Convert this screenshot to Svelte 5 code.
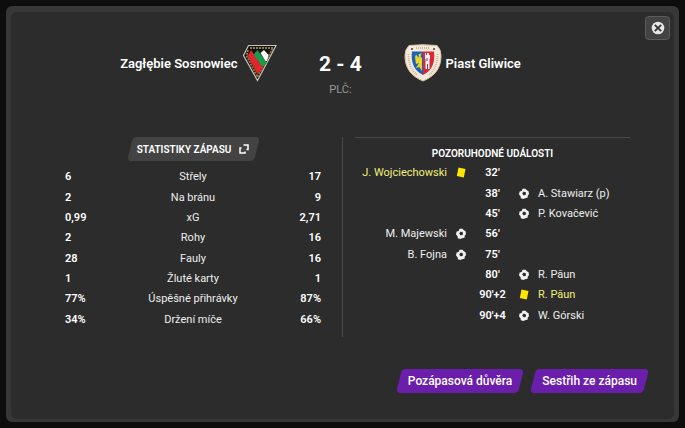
<script lang="ts">
  type MatchEvent = {
    minute: string;
    player: string;
    side: 'home' | 'away';
    type: 'goal' | 'card';
  };

  const stats = [
    { label: 'Střely', home: '6', away: '17' },
    { label: 'Na bránu', home: '2', away: '9' },
    { label: 'xG', home: '0,99', away: '2,71' },
    { label: 'Rohy', home: '2', away: '16' },
    { label: 'Fauly', home: '28', away: '16' },
    { label: 'Žluté karty', home: '1', away: '1' },
    { label: 'Úspěšné přihrávky', home: '77%', away: '87%' },
    { label: 'Držení míče', home: '34%', away: '66%' }
  ];

  const events: MatchEvent[] = [
    { minute: "32'", player: 'J. Wojciechowski', side: 'home', type: 'card' },
    { minute: "38'", player: 'A. Stawiarz (p)', side: 'away', type: 'goal' },
    { minute: "45'", player: 'P. Kovačević', side: 'away', type: 'goal' },
    { minute: "56'", player: 'M. Majewski', side: 'home', type: 'goal' },
    { minute: "75'", player: 'B. Fojna', side: 'home', type: 'goal' },
    { minute: "80'", player: 'R. Păun', side: 'away', type: 'goal' },
    { minute: "90'+2", player: 'R. Păun', side: 'away', type: 'card' },
    { minute: "90'+4", player: 'W. Górski', side: 'away', type: 'goal' }
  ];

  let open = $state(true);
</script>

{#snippet eventIcon(type: string)}
  {#if type === 'card'}
    <svg class="event-icon" width="12" height="12" viewBox="0 0 12 12">
      <path d="M3.500 .5 10.500 2 8.800 10.500 1.800 9Z" fill="#ffe600" />
    </svg>
  {:else}
    <svg class="event-icon" width="12" height="12" viewBox="0 0 12 12">
      <path d="M4.500 .8 7.600 .8 8.800 2.200 10.600 3.300 11 6.300 9.800 7.500 9.500 9.800 7 10.200 5.500 11 2.800 10.200 2.600 8.300 1 6.500 1.600 3.600 3.700 3Z" fill="#f2f2f2" />
      <path d="M5.800 3.600 8 4.500 7.700 6.900 5.300 7.300 4.200 5.300Z" fill="#2c2c2c" />
    </svg>
  {/if}
{/snippet}

{#if open}
  <div class="modal" role="dialog" aria-label="Zagłębie Sosnowiec 2 - 4 Piast Gliwice">
    <div class="panel">
      <button class="close-btn" aria-label="Zavřít" onclick={() => (open = false)}>
        <svg width="14" height="14" viewBox="0 0 14 14">
          <circle cx="7" cy="7" r="6.300" fill="#e8e8e8" />
          <path d="M3.800 3.800 10.200 10.200M10.200 3.800 3.800 10.200" stroke="#333" stroke-width="1.800" />
        </svg>
      </button>

      <header class="match-header">
        <div class="team home">
          <span>Zagłębie Sosnowiec</span>
          <svg width="36" height="38" viewBox="0 0 36 38">
            <path d="M6.500 1.500H34L15.500 36.500 1.500 11.500Z" fill="#171411" stroke="#c9c4b5" stroke-width="1.200" />
            <path d="M8 4H31M6 6 4.500 11.500 15.500 33 30.500 5" fill="none" stroke="#8c7a52" stroke-width="2" stroke-dasharray="2 1" />
            <path d="M5.500 12 9 6 21.500 24 15.500 30Z" fill="#e0262d" />
            <path d="M11.500 10.500 15.500 6 25 19 20.500 23Z" fill="#19994a" />
            <path d="M18.500 9 22 6 26.500 11 25 17 23.500 17Z" fill="#fff" />
          </svg>
        </div>
        <div class="result">
          <div class="score">2 - 4</div>
          <div class="note">PLČ:</div>
        </div>
        <div class="team away">
          <svg width="38" height="38" viewBox="0 0 38 38">
            <path d="M5 1.500Q19 0 33 1.500 37.500 6 37 12C37 24 31 32 19 37 7 32 1 24 1 12Q.5 6 5 1.500Z" fill="#f3eadc" stroke="#dcc4a2" />
            <path d="M12 4H26M4.500 10Q4.500 24 13 31M33.500 10Q33.500 24 25 31" fill="none" stroke="#cdb48f" stroke-width="2" stroke-dasharray="1 1" />
            <circle cx="8" cy="5" r="1" fill="#493b2e" />
            <circle cx="30" cy="5" r="1" fill="#493b2e" />
            <path d="M8 7.500H19V31Q6 25 8 7.500Z" fill="#1f62b5" />
            <path d="M19 7.500H30Q32 25 19 31Z" fill="#dc2734" />
            <path d="M17.500 9 14.500 10.500 15 14 12 10.500 11 13 12 20 15 19 12 24 15.500 23 18 27 18 14 16.500 12.500Z" fill="#e1d52e" />
            <path d="M21 9H22V11H23V9H25V11H26V15H25.500V25H21.500V15H21Z" fill="#eef1f5" />
            <path d="M23 14V17M23.500 20V25" stroke="#4d587e" />
          </svg>
          <span>Piast Gliwice</span>
        </div>
      </header>

      <div class="match-body">
        <section class="stats">
          <button class="skew-btn stats-btn">
            Statistiky zápasu
            <svg width="10" height="10" viewBox="0 0 10 10" fill="none" stroke="#fff" stroke-width="1.500">
              <path d="M4.500 1H9V5.500H7.500M2.500 4H1V9H6V7.500" />
            </svg>
          </button>
          <table>
            <tbody>
              {#each stats as stat}
                <tr>
                  <td class="value">{stat.home}</td>
                  <th scope="row">{stat.label}</th>
                  <td class="value last">{stat.away}</td>
                </tr>
              {/each}
            </tbody>
          </table>
        </section>

        <section class="events">
          <div class="events-inner">
            <h2>Pozoruhodné události</h2>
            <table>
              <tbody>
                {#each events as event}
                  <tr class:booked={event.type === 'card'}>
                    <td class="player last">{event.side === 'home' ? event.player : ''}</td>
                    <td class="icon">{#if event.side === 'home'}{@render eventIcon(event.type)}{/if}</td>
                    <td class="minute">{event.minute}</td>
                    <td class="icon">{#if event.side === 'away'}{@render eventIcon(event.type)}{/if}</td>
                    <td class="player">{event.side === 'away' ? event.player : ''}</td>
                  </tr>
                {/each}
              </tbody>
            </table>
          </div>
        </section>
      </div>

      <footer>
        <button class="skew-btn action">Pozápasová důvěra</button>
        <button class="skew-btn action">Sestřih ze zápasu</button>
      </footer>
    </div>
  </div>
{/if}

<style>
  :global(body) {
    background: #0d0d0d;
    color: #fff;
    font-family: Roboto, 'Liberation Sans', sans-serif;
    font-size: 11px;
  }

  .modal {
    margin: 6px;
    padding: 6px 5px 3px;
    background: #373737;
    border-radius: 6px;
  }

  .panel {
    position: relative;
    padding: 32px 25px 26px 54px;
    background: #2c2c2c;
    border-radius: 6px;
  }

  button {
    font-family: inherit;
    color: #fff;
    border: none;
    cursor: pointer;
  }

  .close-btn {
    position: absolute;
    top: 4px;
    right: 4px;
    display: flex;
    align-items: center;
    justify-content: center;
    width: 25px;
    height: 24px;
    padding: 0;
    background: #434343;
    border: 1px solid #5c5c5c;
    border-radius: 4px;
  }

  .match-header {
    display: grid;
    grid-template-columns: 1fr 126px 1fr;
    margin: 0 0 37px -28px;
    padding-right: 5px;
  }

  .team {
    display: flex;
    align-items: center;
    gap: 4px;
    height: 38px;
    font-size: 13px;
    font-weight: 600;
  }

  .home {
    justify-content: flex-end;
  }

  .result {
    padding-top: 8px;
    text-align: center;
  }

  .score {
    font-size: 21px;
    line-height: 24px;
    font-weight: 700;
  }

  .note {
    margin-top: 4px;
    line-height: 20px;
    color: #999;
  }

  .match-body {
    display: grid;
    grid-template-columns: 277fr 307fr;
    margin-bottom: 32px;
  }

  .stats {
    padding-right: 21px;
  }

  .events {
    min-height: 200px;
    padding: 0 19px 0 12px;
    border-left: 1px solid #4a4a4a;
  }

  .events-inner {
    border-top: 1px solid #4a4a4a;
  }

  .skew-btn {
    position: relative;
    z-index: 0;
    height: 24px;
    padding: 0 12px;
    background: none;
    font-weight: 600;
  }

  .skew-btn::before {
    content: '';
    position: absolute;
    inset: 0 3px;
    z-index: -1;
    background: #434343;
    border-radius: 4px;
    transform: skewX(-14deg);
  }

  .stats-btn {
    display: flex;
    align-items: center;
    gap: 8px;
    margin: 0 auto 6px;
    padding: 0 10px;
    font-size: 10px;
    text-transform: uppercase;
  }

  h2 {
    margin: 0;
    padding: 6px 0 0;
    font-size: 10px;
    line-height: 19px;
    font-weight: 600;
    text-align: center;
    text-transform: uppercase;
  }

  table {
    width: 100%;
    height: 163px;
    table-layout: fixed;
    border-collapse: collapse;
  }

  td,
  th {
    padding: 0;
    line-height: 20px;
    font-weight: 400;
    white-space: nowrap;
  }

  th {
    width: 50%;
    color: #eee;
  }

  .value,
  .minute {
    font-weight: 600;
  }

  .minute {
    width: 35px;
    text-align: center;
  }

  .icon {
    width: 28px;
  }

  .event-icon {
    display: block;
    margin: 0 auto;
  }

  .player {
    color: #eee;
  }

  .booked .player {
    color: #f0f078;
  }

  .last {
    text-align: right;
  }

  footer {
    display: flex;
    justify-content: flex-end;
    gap: 6px;
  }

  .action {
    font-size: 12px;
    font-weight: 500;
  }

  .action::before {
    background: #6a1eab;
  }
</style>
